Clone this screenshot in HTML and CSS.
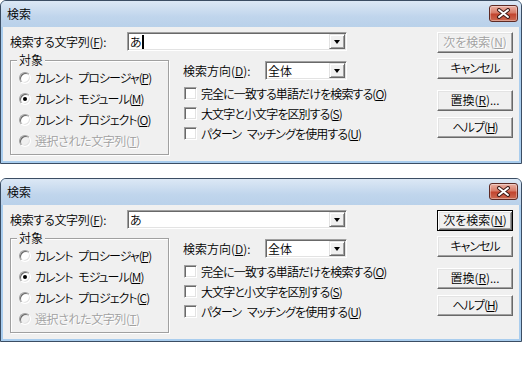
FILE: index.html
```html
<!DOCTYPE html>
<html lang="ja">
<head>
<meta charset="utf-8">
<title>検索</title>
<link rel="stylesheet" href="styles.css">
</head>
<body>
<div class="page">
  <div class="window">
    <div class="titlebar">
      <span class="title">検索</span>
      <div class="close"><svg width="15" height="11" viewBox="0 0 15 11"><path d="M3 2 L12 9 M12 2 L3 9" stroke="#3d1a16" stroke-width="4" stroke-linecap="round"/><path d="M3 2 L12 9 M12 2 L3 9" stroke="#fff" stroke-width="2" stroke-linecap="round"/></svg></div>
    </div>
    <div class="client">
      <div class="main">
        <div class="row1">
          <span class="lbl">検索する文字列(<u>F</u>):</span>
          <div class="field combo wide"><span class="val">あ</span><span class="caret"></span><span class="fill"></span><span class="drop"><i></i></span></div>
        </div>
        <div class="row2">
          <fieldset class="group">
            <legend>対象</legend>
            <div class="radios">
              <div class="opt"><span class="radio"></span><span class="txt">カレント プロシージャ(<u>P</u>)</span></div>
              <div class="opt"><span class="radio on"></span><span class="txt">カレント モジュール(<u>M</u>)</span></div>
              <div class="opt"><span class="radio"></span><span class="txt">カレント プロジェクト(<u>O</u>)</span></div>
              <div class="opt dis"><span class="radio"></span><span class="txt">選択された文字列(<u>T</u>)</span></div>
            </div>
          </fieldset>
          <div class="opts">
            <div class="dir">
              <span class="dlbl">検索方向(<u>D</u>):</span>
              <div class="field combo small"><span class="val">全体</span><span class="fill"></span><span class="drop"><i></i></span></div>
            </div>
            <div class="chk first"><span class="box"></span><span class="txt">完全に一致する単語だけを検索する(<u>O</u>)</span></div>
            <div class="chk"><span class="box"></span><span class="txt">大文字と小文字を区別する(<u>S</u>)</span></div>
            <div class="chk"><span class="box"></span><span class="txt">パターン マッチングを使用する(<u>U</u>)</span></div>
          </div>
        </div>
      </div>
      <div class="buttons">
        <div class="btn disabled">次を検索(<u>N</u>)</div>
        <div class="btn kana">キャンセル</div>
        <div class="btn replace">置換(<u>R</u>)...</div>
        <div class="btn help kana">ヘルプ(<u>H</u>)</div>
      </div>
    </div>
  </div>

  <div class="window">
    <div class="titlebar">
      <span class="title">検索</span>
      <div class="close"><svg width="15" height="11" viewBox="0 0 15 11"><path d="M3 2 L12 9 M12 2 L3 9" stroke="#3d1a16" stroke-width="4" stroke-linecap="round"/><path d="M3 2 L12 9 M12 2 L3 9" stroke="#fff" stroke-width="2" stroke-linecap="round"/></svg></div>
    </div>
    <div class="client">
      <div class="main">
        <div class="row1">
          <span class="lbl">検索する文字列(<u>F</u>):</span>
          <div class="field combo wide"><span class="val">あ</span><span class="fill"></span><span class="drop"><i></i></span></div>
        </div>
        <div class="row2">
          <fieldset class="group">
            <legend>対象</legend>
            <div class="radios">
              <div class="opt"><span class="radio"></span><span class="txt">カレント プロシージャ(<u>P</u>)</span></div>
              <div class="opt"><span class="radio on"></span><span class="txt">カレント モジュール(<u>M</u>)</span></div>
              <div class="opt"><span class="radio"></span><span class="txt">カレント プロジェクト(<u>C</u>)</span></div>
              <div class="opt dis"><span class="radio"></span><span class="txt">選択された文字列(<u>T</u>)</span></div>
            </div>
          </fieldset>
          <div class="opts">
            <div class="dir">
              <span class="dlbl">検索方向(<u>D</u>):</span>
              <div class="field combo small"><span class="val">全体</span><span class="fill"></span><span class="drop"><i></i></span></div>
            </div>
            <div class="chk first"><span class="box"></span><span class="txt">完全に一致する単語だけを検索する(<u>O</u>)</span></div>
            <div class="chk"><span class="box"></span><span class="txt">大文字と小文字を区別する(<u>S</u>)</span></div>
            <div class="chk"><span class="box"></span><span class="txt">パターン マッチングを使用する(<u>U</u>)</span></div>
          </div>
        </div>
      </div>
      <div class="buttons">
        <div class="btn default">次を検索(<u>N</u>)</div>
        <div class="btn kana">キャンセル</div>
        <div class="btn replace">置換(<u>R</u>)...</div>
        <div class="btn help kana">ヘルプ(<u>H</u>)</div>
      </div>
    </div>
  </div>
</div>
</body>
</html>
```

FILE: styles.css
```css
* { box-sizing: border-box; }
html, body { margin: 0; background: #fff; }
body {
  font-family: "Noto Sans CJK JP", "Noto Sans", sans-serif;
  font-size: 12px;
  font-weight: 350;
  color: #000;
  font-feature-settings: "palt";
  width: 524px;
  height: 366px;
  overflow: hidden;
}
u { text-underline-offset: 1px; text-decoration-thickness: 1px; }

.page { display: flex; flex-direction: column; gap: 14px; width: 522px; }

.window {
  height: 164px;
  border: 1px solid #3b4d63;
  border-radius: 6px 6px 0 0;
  background: #a9cdee;
  display: flex;
  flex-direction: column;
}
.titlebar {
  height: 26px;
  flex: none;
  display: flex;
  align-items: flex-start;
  justify-content: space-between;
  background: linear-gradient(#dce8f5, #c0d5ec 60%, #b9d1ea);
  border-radius: 5px 5px 0 0;
  padding: 4px 3px 0 6px;
}
.title { line-height: 18px; }
.close {
  width: 29px;
  height: 17px;
  border: 1px solid #5e2a24;
  border-radius: 3px;
  background: linear-gradient(#eab1a4, #d87c68 45%, #c2452f 55%, #cc6a52);
  box-shadow: inset 0 0 0 1px rgba(255,255,255,0.35);
  display: flex;
  align-items: center;
  justify-content: center;
}
.client {
  flex: 1;
  margin: 0 2px 2px;
  background: #f0f0f0;
  display: flex;
  padding: 5px 6px 0 7px;
}
.main { flex: 1; display: flex; flex-direction: column; }
.row1 { display: flex; align-items: center; height: 19px; }
.lbl { width: 117px; line-height: 19px; letter-spacing: -0.3px; }

.field {
  border: 1px solid;
  border-color: #a0a0a0 #fff #fff #a0a0a0;
  box-shadow: inset 1px 1px 0 #696969, inset -1px -1px 0 #e3e3e3;
  background: #fff;
}
.combo {
  height: 19px;
  display: flex;
  align-items: center;
  padding: 1px;
}
.wide { width: 220px; }
.small { width: 82px; }
.val { padding-left: 1px; line-height: 15px; }
.caret { width: 2px; height: 14px; background: #000; }
.fill { flex: 1; }
.drop {
  width: 16px;
  height: 15px;
  background: #f0f0f0;
  border: 1px solid;
  border-color: #e3e3e3 #696969 #696969 #e3e3e3;
  box-shadow: inset 1px 1px 0 #fff, inset -1px -1px 0 #a0a0a0;
  display: flex;
  align-items: center;
  justify-content: center;
}
.drop i {
  width: 0; height: 0;
  border-left: 3.5px solid transparent;
  border-right: 3.5px solid transparent;
  border-top: 4px solid #000;
  margin-top: 1px;
}

.row2 { display: flex; margin-top: 2px; }
.group {
  width: 159px;
  margin: 0;
  padding: 0 0 3px 0;
  border: 1px solid #a0a0a0;
  box-shadow: 1px 1px 0 #fff, inset 1px 1px 0 #fff;
  min-inline-size: 0;
}
.group legend {
  margin-left: 6px;
  padding: 0 2px;
  line-height: 14px;
  background: #f0f0f0;
}
.radios { padding-left: 8px; }
.opt { display: flex; align-items: center; height: 21px; gap: 4px; white-space: nowrap; }
.txt { letter-spacing: -1px; word-spacing: 4px; }
.radio {
  width: 12px; height: 12px; flex: none;
  border-radius: 50%;
  border: 1px solid;
  border-color: #a0a0a0 #fff #fff #a0a0a0;
  box-shadow: inset 1px 1px 0 #696969, inset -1px -1px 0 #e3e3e3;
  background: #fff;
  display: flex; align-items: center; justify-content: center;
}
.radio.on::after {
  content: "";
  width: 4px; height: 4px;
  border-radius: 50%;
  background: #000;
}
.dis { color: #a0a0a0; text-shadow: 1px 1px 0 #fff; }
.dis .txt { letter-spacing: -0.4px; }
.dis .radio { background: #f0f0f0; }

.opts { margin-left: 14px; padding-top: 8px; display: flex; flex-direction: column; }
.dir { display: flex; align-items: center; height: 19px; }
.dlbl { width: 82px; }
.chk { display: flex; align-items: center; height: 20px; gap: 4px; white-space: nowrap; padding-left: 1px; }
.chk .txt { letter-spacing: -0.9px; }
.chk.first { margin-top: 3px; }
.box {
  width: 13px; height: 13px; flex: none;
  border: 1px solid;
  border-color: #a0a0a0 #fff #fff #a0a0a0;
  box-shadow: inset 1px 1px 0 #696969, inset -1px -1px 0 #e3e3e3;
  background: #fff;
}

.buttons { width: 76px; display: flex; flex-direction: column; }
.btn {
  height: 21px;
  border: 1px solid;
  border-color: #fff #696969 #696969 #fff;
  box-shadow: inset -1px -1px 0 #a0a0a0, inset 1px 1px 0 #e3e3e3;
  background: #f0f0f0;
  text-align: center;
  line-height: 18px;
  white-space: nowrap;
}
.btn.kana { letter-spacing: -1px; }
.btn + .btn { margin-top: 5px; }
.btn.replace { margin-top: 11px; }
.btn.help { margin-top: 6px; }
.btn.disabled { color: #a0a0a0; text-shadow: 1px 1px 0 #fff; }
.btn.default {
  border-color: #000;
  box-shadow: inset 1px 1px 0 #fff, inset -1px -1px 0 #696969, inset 2px 2px 0 #e3e3e3, inset -2px -2px 0 #a0a0a0;
}
```
